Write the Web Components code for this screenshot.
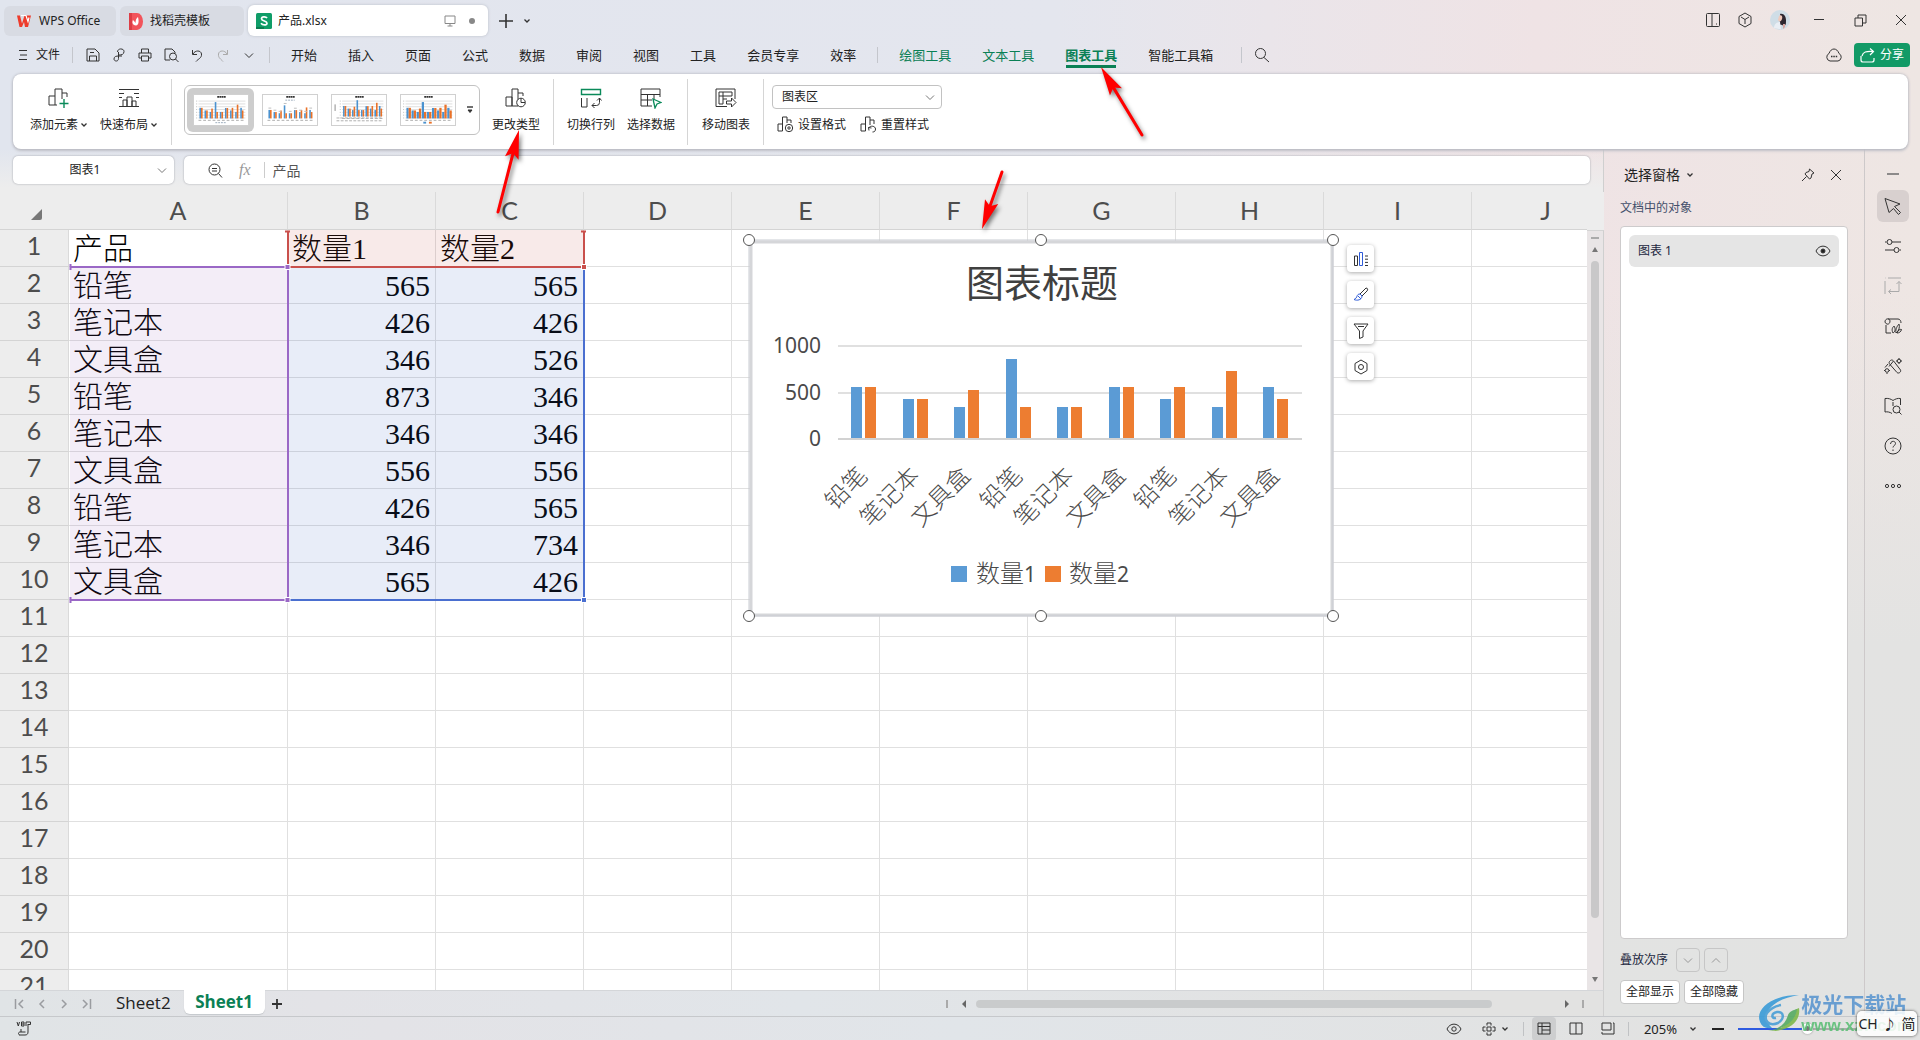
<!DOCTYPE html>
<html lang="zh-CN">
<head>
<meta charset="utf-8">
<title>产品.xlsx - WPS Office</title>
<style>
html,body{height:100%;margin:0}
body{overflow:hidden;font:12px/16px "Noto Sans","Noto Sans CJK SC",sans-serif;color:#222}
</style>
</head>
<body>
<wps-app></wps-app>
<script>
const BASE = `*{box-sizing:border-box}
button,input,select{font:inherit;color:inherit;margin:0;padding:0;border:0;background:none;outline:0}
button{display:inline-flex;align-items:center;justify-content:center;white-space:nowrap}
a{color:inherit;text-decoration:none}`;
function define(name, css, html, setup) {
  customElements.define(name, class extends HTMLElement {
    constructor() {
      super();
      this.attachShadow({ mode: 'open' });
    }
    connectedCallback() {
      const body = typeof html === 'function' ? html(this) : html;
      this.shadowRoot.innerHTML = `<style>${BASE}${css}</style>${body}`;
      if (setup) setup(this);
    }
  });
}

/* Icon set: [width, height, markup] */
const ICONS = {
  wps: [16,14,'<path d="M1 1.500h3l2 8L8.500 1.500H15L12 13H9L8 8l-2 5H3.500z" fill="#ee3b2b" stroke="none"/><path d="M5 1.500h5l2 6 1-4" stroke="#fff" stroke-width="1.200"/>'],
  docer: [15,17,'<path d="M1 0h8a6 8.500 0 010 17H1z" fill="#f2545b" stroke="none"/><path d="M1 0h3v17H1z" fill="#dd3d45" stroke="none"/><path d="M8 12.500C4 12 4 9 5 7c1 1 2 2 2.500 3C7.500 7 8.500 5 10 4c1 4 1 8-2 8.500z" fill="#fff" stroke="none"/>'],
  sheetdoc: [16,16,'<rect width="16" height="16" rx="1.500" fill="#0f9d68" stroke="none"/><path d="M0 14h8v2H0z" fill="#0b7d50" stroke="none"/><path d="M11 5.200C10 3.300 5.500 3.300 5.500 5.800S11 7.800 11 10.200 6.500 12.300 5 10.300" stroke="#fff" stroke-width="1.700"/>'],
  monitor: [12,12,'<path d="M1 1h10v7.500H1zM6 8.500V11M3.500 11h5" stroke="#888"/>'],
  dot: [8,8,'<circle cx="4" cy="4" r="3" fill="#888" stroke="none"/>'],
  plus: [14,14,'<path d="M7 0v14M0 7h14" stroke-width="1.600"/>'],
  plusb: [10,10,'<path d="M5 0v10M0 5h10" stroke-width="1.800"/>'],
  chev: [8,6,'<path d="M1.500 1.500L4 4l2.500-2.500" stroke-width="1.300"/>'],
  chevw: [10,7,'<path d="M1 1.500l4 4 4-4"/>'],
  chevup: [10,7,'<path d="M1 5.500l4-4 4 4"/>'],
  menu: [10,12,'<path d="M1 1.500h8M2 6h7M1 10.500h8"/>'],
  save: [14,14,'<path d="M1 13V1h8l4 4v8zM3.500 13V8h7v5M4 4.500h4"/>'],
  share2: [12,14,'<path d="M4.500 4C4.500 0 11 0 11 3.500c0 3-2.500 3.500-5 3.500M5.500 4v6.500c0 3.500-4.500 3-4.500.5S3 8 6 8h3"/>'],
  print: [14,14,'<path d="M3.500 5V1h7v4M3.500 10H1V5h12v5h-2.500M3.500 8h7v5h-7z"/>'],
  preview: [15,14,'<path d="M6 12H1V1h7l3 3M11 5V4"/><circle cx="9" cy="8.500" r="3.500"/><path d="M11.500 11l3 3"/>'],
  undo: [12,13,'<path d="M1.500 1v4.500H6M2 5C4 1 10 1 10.500 5S7 10 5 12.500"/>'],
  redo: [12,13,'<path d="M10.500 1v4.500H6M10 5C8 1 2 1 1.500 5S4 10 6 12.500"/>'],
  search: [16,16,'<circle cx="6.500" cy="6.500" r="5"/><path d="M10 10.500l5 4.500"/>'],
  book: [14,14,'<rect x=".5" y=".5" width="13" height="13" rx="1"/><path d="M6 .5v13M10 11h1"/>'],
  cube: [14,16,'<path d="M7 1l6 3.500v7L7 15l-6-3.500v-7zM3 5l4 2.500L11 5M7 7.500V12"/>'],
  avatar: [20,20,'<circle cx="10" cy="10" r="10" fill="#cfdde6" stroke="none"/><path d="M10 4c4-1 6 3 6 6 0 4 0 5-2 6l-2-1-4-1 3-4z" fill="#2d2730" stroke="none"/><path d="M9 6c2-2 4 0 3 3s-3 3-4 1z" fill="#efc9bb" stroke="none"/><path d="M4 18c0-4 3-6 6-6l1 7.500z" fill="#e9eef4" stroke="none"/><path d="M13 14h2v3l-2 2z" fill="#d9a5a0" stroke="none"/>'],
  min: [12,12,'<path d="M1 5.500h10"/>'],
  minb: [12,12,'<path d="M0 6h12" stroke-width="2"/>'],
  restore: [13,13,'<path d="M1 4h7.500v8H1zM4 4V1h8v8H8.500"/>'],
  close: [12,12,'<path d="M1 1l10 10M11 1L1 11"/>'],
  cloud: [18,14,'<path d="M5 13a4 4 0 01-1-7.500C5 2.500 7 1 9 1s4 1.500 5 4.500A4 4 0 0113 13z"/><path d="M6 8.500h1.500M8.300 8.500h1.500M10.700 8.500h1.500" stroke-width="1.500"/>'],
  shareout: [15,15,'<path d="M1 8v4a2 2 0 002 2h9a2 2 0 002-2v-2M2 8c1-4 4-5 11-4.500M10 .5l3.500 3L10 7" stroke="#fff" stroke-width="1.200"/>'],
  addel: [22,20,'<path d="M1 17V8h6M7 17V1h7v10M1 17h8M14 5h5v4"/><path d="M16 11v9M11.500 15.500h9" stroke="#0a8a5a" stroke-width="1.400"/>'],
  quick: [20,20,'<path d="M0 1.500h20M0 5.500h5M15 5.500h5M0 9.500h3M17 9.500h3M0 18.500h20M4 18V12h4v6M8 18V9h5v9M13 18v-5h4v5"/>'],
  chtype: [22,20,'<path d="M1 18V9h6v9zM7 18V1h6v17H7M13 5h5v3"/><circle cx="16" cy="14.500" r="4.300" fill="#fff"/><path d="M16 10.500v4h4"/>'],
  swap: [22,20,'<path d="M1.500 1.500h19v5h-19z" stroke="#0a8a5a" stroke-width="1.400"/><path d="M1.500 10v9h5.500v-9M12 17.500h4.500a3 3 0 003-3V10M17 12.500l2.500-2.500 2 2.500M14.500 15L12 17.500l2.500 2.500"/>'],
  seldata: [22,21,'<path d="M12 18H1V1h19v8M1 6.500h19M1 12h11M7.500 6.500V18M14 6.500V11"/><path d="M13 11l8 3.500-4 1.500-2 4z" stroke="#0a8a5a" stroke-width="1.300" fill="#fff"/>'],
  move: [22,20,'<path d="M12 18.500H1V1h19v10M4 4h13v4H4zM4 8v8h4V4M8 11h4"/><path d="M11.500 13h5v-3l4.500 4.500-4.500 4.500v-3h-5z" fill="#fff"/>'],
  fmt: [17,17,'<path d="M1 15V8h4.500v7zM5.500 15V1H10v6M10 4h4v3"/><circle cx="12" cy="12" r="3.700" fill="#fff"/><circle cx="12" cy="12" r="1.200"/>'],
  reset: [17,17,'<path d="M1 15V8h4.500v7zM5.500 15V1H10v8M10 4h4v4M9 14.500l-.5-3 3 .5M8.500 12c2-3 7-2 7 1 0 2-1 3-3 3"/>'],
  more: [6,8,'<path d="M0 1h6" stroke-width="1.400"/><path d="M1 4l2 2.500L5 4z" fill="#333"/>'],
  zoomout: [15,15,'<circle cx="6.500" cy="6.500" r="5.500"/><path d="M10.500 10.500L14 14.500M4 5.500h5M4 8h5"/>'],
  corner: [11,11,'<path d="M11 0v9a2 2 0 01-2 2H0z" fill="#777" stroke="none"/>'],
  up: [8,6,'<path d="M4 0l3 5H1z" fill="#777" stroke="none"/>'],
  down: [8,6,'<path d="M4 6L1 1h6z" fill="#777" stroke="none"/>'],
  left: [6,8,'<path d="M1 4l4-4v8z" fill="#666" stroke="none"/>'],
  right: [6,8,'<path d="M5 4L1 0v8z" fill="#666" stroke="none"/>'],
  first: [12,10,'<path d="M1.500 0v10M9 1L5 5l4 4" stroke-width="1.500"/>'],
  prev: [12,10,'<path d="M8 1L4 5l4 4" stroke-width="1.500"/>'],
  next: [12,10,'<path d="M4 1l4 4-4 4" stroke-width="1.500"/>'],
  last: [12,10,'<path d="M10.500 0v10M3 1l4 4-4 4" stroke-width="1.500"/>'],
  vb: [16,15,'<path d="M1 1l1.300 4L3.500 1M5.500 1v4h2.500V1zM5.500 3H8M10 5V1h4.500v2.500H12M12 3v8c0 2-1 3-3 3H3.500M5 11V8M4 11h5.500M4 11c-2 0-2 3 0 3"/>'],
  pin: [14,14,'<path d="M8.500 1l4.500 4-2 1-1 4-1.500 1L4 6l1-1.500 3-1zM5.500 8.500L1 13"/>'],
  eye: [16,12,'<path d="M1 6c3-6.500 11-6.500 14 0-3 6.500-11 6.500-14 0z"/><circle cx="8" cy="6" r="2" fill="#222"/>'],
  eye2: [16,12,'<path d="M1 6c3-6.500 11-6.500 14 0-3 6.500-11 6.500-14 0z"/><circle cx="8" cy="6" r="2.200"/>'],
  cursor: [18,18,'<path d="M1 1.500l15 5.500-5.500 2.500 6 6-2 2-5-6-4.500 4z"/>'],
  sliders: [18,16,'<path d="M1 4h1.500M8 4h9M1 12h9M15.500 12H17"/><circle cx="5.500" cy="4" r="2.500"/><circle cx="12.500" cy="12" r="2.500"/>'],
  resize: [18,18,'<path d="M4 1h13M1 4v13M1 1h.5M15 4.500V14.500H5M12.500 7L15 4.500 17.500 7M7 12.500L4.500 14.500 7 17"/>'],
  album: [18,16,'<path d="M2 7v8h5M1 4c0-4 5-4 5-1 0 4-4 4-5 1zM4 1h10c2 0 3 2 3 4M9 15c-2-4 0-6 1-7 2 3 1 6-1 7zM12 15c-1-4 2-8 3-9 1 3 0 7-3 9zM13 15c1-3 3-4 4.500-3.500C17 14 15 15 13 15z"/>'],
  wand: [18,16,'<path d="M5.500 3.500c1.500-2 3-2 4.500 0L16.500 12c1 2-2 4-3.500 2.500L6 6.500c-1-1-1.200-2-.5-3zM9.500 3L5 8.500M1 9.500L4 6"/><circle cx="15" cy="3" r="1.800"/><circle cx="3" cy="12.500" r="1.800"/><path d="M15 0v1M15 5v1M12 3h1M17 3h1M0 12.500h1M3 15v1M5 12.500h1"/>'],
  bookfind: [18,18,'<path d="M9 5v4M9 3.500C7 2 4 1 1 1.500V15c2-.5 5 0 7 1.500M9 3.500C11 2 14 1 16.500 1.500V8"/><circle cx="12.500" cy="12.500" r="3.500"/><path d="M15 15l2.500 2.500"/>'],
  help: [18,18,'<circle cx="9" cy="9" r="8"/><path d="M6.500 7c0-3.500 5-3.500 5-.5 0 2-2.500 2-2.500 4M9 12.500v1.500"/>'],
  dots3: [18,6,'<circle cx="3" cy="3" r="1.600"/><circle cx="9" cy="3" r="1.600"/><circle cx="15" cy="3" r="1.600"/>'],
  target: [14,14,'<path d="M5 3.500V1h4v2.500M5 10.500V13h4v-2.500M3.500 5H1v4h2.500M10.500 5H13v4h-2.500M5 5h4v4H5z"/>'],
  normal: [14,13,'<path d="M1 1h12v11H1zM1 4.500h12M5 1v11M5 8h8"/>'],
  split: [14,13,'<path d="M1 1h12v11H1zM7 1v11"/>'],
  reader: [14,13,'<path d="M1 1h9v7H1zM1 10v2h12V1h-1"/>'],
  celement: [16,16,'<path d="M1.500 5v9.500h3V5z"/><path d="M6.500 1.500v13h3v-13z" stroke="#2e5bd8"/><path d="M12 5h3M12 8.200h3M12 11.400h3M12 14.500h3"/>'],
  brush: [16,15,'<path d="M7 7l6-6c2 0 2 2 1 3L9 9z"/><path d="M7 7C3 7 5 11 1 12.500 4 14 9 13 9 9zM5 9l3 3" stroke="#2e5bd8"/>'],
  funnel: [16,16,'<path d="M1 1h14L10 8v6l-3.500 1.500V8zM5 3.500h6"/>'],
  hexset: [16,16,'<path d="M8 1l6 3.500v7L8 15l-6-3.500v-7z"/><circle cx="8" cy="8" r="2.500"/>'],
  globe: [42,38,'<path d="M2 28C-3 16 12 1 41 1 24 4 12 10 9 20c-1 6 1 10 5 14C8 35 4 33 2 28z" fill="#3a9bd8" stroke="none"/><path d="M10 37c13 0 21-7 23-17 1-3 4-4 8-6 2 12-8 24-31 23z" fill="#7fb84a" stroke="none"/><path d="M10 37c12-2 18-8 20-16 1-3 5-5 9-6-1 10-10 20-29 22z" fill="#56ab62" stroke="none"/><path d="M18 24c-5 1-5-5 1-6 7-1 8 7 1 11-9 4-15-3-11-10 3-4 8-7 14-8" stroke="#4a9fd6" stroke-width="2.500"/>']
};
define('ui-icon', `:host{display:inline-flex;flex:none;color:#333}svg{display:block}`, el => {
  const [w, h, m] = ICONS[el.getAttribute('name')];
  return `<svg width="${w}" height="${h}" viewBox="0 0 ${w} ${h}" fill="none" stroke="currentColor" aria-hidden="true">${m}</svg>`;
});
const ic = (n, c) => `<ui-icon name="${n}"${c ? ` style="color:${c}"` : ''}></ui-icon>`;

define('title-bar', `:host{display:flex;height:36px;align-items:flex-end;padding:0 12px 0 4px;gap:4px}
.tab{height:30px;display:flex;align-items:center;border-radius:6px;background:#d8dbe3;padding:0 12px;gap:7px;font-size:12px;cursor:default}
.home{width:112px}.docer{width:124px;padding-left:8px}
.on{width:240px;height:31px;background:#fff;box-shadow:0 0 3px #b9bdc6;padding-left:8px;gap:6px}
.on span{flex:1}.on ui-icon+ui-icon{margin-left:6px}
.new{display:flex;gap:10px;height:30px;align-items:center;padding-left:7px}
.win{margin-left:auto;display:flex;align-items:center;height:32px;gap:18px}
.win button{min-width:14px}.win .sys{display:flex;gap:27px;margin-left:4px}`,
`<a class="tab home" href="#">${ic('wps')}<span>WPS Office</span></a><a class="tab docer" href="#">${ic('docer')}<span>找稻壳模板</span></a>
<a class="tab on" href="#">${ic('sheetdoc')}<span>产品.xlsx</span>${ic('monitor')}${ic('dot')}</a>
<div class="new"><button aria-label="新建">${ic('plus')}</button><button aria-label="更多">${ic('chev')}</button></div>
<div class="win"><button aria-label="侧栏">${ic('book')}</button><button aria-label="应用">${ic('cube')}</button><button aria-label="账户">${ic('avatar')}</button>
<div class="sys"><button aria-label="最小化">${ic('min')}</button><button aria-label="还原">${ic('restore')}</button><button aria-label="关闭">${ic('close')}</button></div></div>`);

define('menu-bar', `:host{display:flex;height:38px;align-items:center;padding:0 10px 0 18px}
.file{gap:8px;font-size:12px;width:54px;justify-content:flex-start}
i{width:1px;height:16px;background:#c4c6cc}
.quick{display:flex;margin:0 7px}.quick button{width:26px;height:24px}
nav{display:flex;gap:31px;font-size:13px;line-height:20px;padding-left:21px;align-items:center}
nav a{white-space:nowrap}.g{color:#0a8055}
.on{font-weight:700;box-shadow:0 4px 0 -1px #0a8055}
nav i{margin:0 -10px}nav i.end{margin-left:-3px}.find{margin-left:-9px}
.right{margin-left:auto;display:flex;align-items:center;gap:11px}
.share{width:56px;height:24px;border-radius:4px;background:#129a66;color:#fff;gap:5px;font-size:12px}`,
`<button class="file">${ic('menu')}文件</button><i></i>
<div class="quick">${[['save','保存'],['share2','分享'],['print','打印'],['preview','预览'],['undo','撤销']].map(b=>`<button aria-label="${b[1]}">${ic(b[0])}</button>`).join('')}<button aria-label="恢复">${ic('redo','#aaa')}</button><button aria-label="更多">${ic('chevw')}</button></div><i></i>
<nav>${['开始','插入','页面','公式','数据','审阅','视图','工具','会员专享','效率'].map(t=>`<a href="#">${t}</a>`).join('')}<i></i><a class="g" href="#">绘图工具</a><a class="g" href="#">文本工具</a><a class="g on" href="#">图表工具</a><a href="#">智能工具箱</a><i class="end"></i><button class="find" aria-label="查找">${ic('search')}</button></nav>
<div class="right"><button aria-label="云">${ic('cloud')}</button><button class="share">${ic('shareout')}分享</button></div>`);

define('ribbon-button', `:host{display:inline-flex}
button{flex-direction:column;height:46px;justify-content:space-between;font-size:12px;line-height:16px}
.i{height:22px;display:flex;align-items:center}.t{display:flex;align-items:center;gap:2px}`,
el => `<button><span class="i">${ic(el.getAttribute('icon'))}</span><span class="t"><slot></slot>${el.hasAttribute('menu') ? ic('chev') : ''}</span></button>`);

const SERIES = [[565,565],[426,426],[346,526],[873,346],[346,346],[556,556],[426,565],[346,734],[565,426]];
const NAMES = ['铅笔','笔记本','文具盒'];
define('chart-thumb', `:host{display:flex;width:56px;height:32px}svg{background:#fff;border:1px solid #d0d0d0}`, el => {
  const v = +el.getAttribute('variant');
  const y0 = v === 2 ? 23 : 25, x0 = v === 2 ? 10 : 4, step = (53 - x0) / 9, hs = v === 1 ? 16 : 20;
  let s = '';
  if (v !== 1) for (let y = 6; y < y0; y += 3) s += `<path d="M${x0} ${y}.5H54" stroke="#ddd"/>`;
  s += `<path d="M24 2h9" stroke="#333" stroke-width="2" stroke-dasharray="2 .4"/>`;
  SERIES.forEach((p, i) => {
    const x = x0 + 1 + i * step, w = v === 3 ? 2.400 : 1.700;
    s += `<rect x="${x}" y="${y0 - p[0] / 1000 * hs}" width="${w}" height="${p[0] / 1000 * hs}" fill="#4b92cf"/><rect x="${x + w}" y="${y0 - p[1] / 1000 * hs}" width="${w}" height="${p[1] / 1000 * hs}" fill="#ea7228"/>`;
    if (v === 1) s += `<path d="M${x} ${y0 - p[0] / 1000 * hs - 2}h3" stroke="#bbb"/>`;
  });
  s += `<path d="M${x0} ${y0 + 2}H53" stroke="#aaa" stroke-dasharray="3 2"/>`;
  if (v === 0) s += '<path d="M22 29.500h11" stroke="#9ab" stroke-dasharray="2 1"/>';
  if (v === 1) s += '<path d="M23 5.500h10" stroke="#9ab" stroke-dasharray="2 1"/>';
  if (v === 2) s += `<path d="M4 24.500H53M4 27.500H53" stroke="#aaa" stroke-dasharray="3 1.500"/><path d="M2.500 10v7" stroke="#888"/>`;
  if (v === 3) s += '<path d="M23 29.500h3" stroke="#4b92cf" stroke-width="2"/><path d="M29 29.500h3" stroke="#ea7228" stroke-width="2"/>';
  if (v !== 1) s += `<path d="M${x0 - 2} 6v19" stroke="#bbb" stroke-dasharray="1 2"/>`;
  return `<svg width="56" height="32" viewBox="0 0 56 32">${s}</svg>`;
});

define('ribbon-bar', `:host{display:flex;height:75px;margin:0 12px 0 13px;background:#fff;border-radius:8px;box-shadow:0 0 3px #aeb0b8,0 2px 3px #c5c5cc;padding:5px 0 4px 17px}
.grp{display:flex;padding-top:8px;align-items:flex-start}
.a{gap:12px;width:141px}
hr{margin:0;border:0;width:1px;height:66px;background:#d5d5d5;flex:none}
.b{padding:6px 13px 0 12px}.c{padding-left:13px;padding-right:12px;gap:12px}.d{padding-left:14px;padding-right:13px}
.gallery{display:flex;border:1px solid #c2c2c2;border-radius:6px;width:296px;height:50px;padding:2px;gap:2px}
.gallery button{width:68px;height:44px;border-radius:6px}.gallery button.on{background:#cdcdcd}.gallery .m{width:14px}
.b ribbon-button{margin:2px 0 0 12px}
.e{display:flex;flex-direction:column;gap:7px;padding:6px 0 0 8px}
label{display:grid;width:170px;height:24px;align-items:center}
label>*{grid-area:1/1}label ui-icon{justify-self:end;margin-right:7px;pointer-events:none}
select{appearance:none;width:100%;height:24px;border:1px solid #c2c2c2;border-radius:4px;padding-left:9px}
.row{display:flex;gap:14px;padding-left:5px}.row button{gap:4px;line-height:16px}`,
`<div class="grp a"><ribbon-button icon="addel" menu>添加元素</ribbon-button><ribbon-button icon="quick" menu>快速布局</ribbon-button></div><hr>
<div class="grp b"><div class="gallery">${[0,1,2,3].map(i=>`<button class="${i?'':'on'}" aria-label="样式"><chart-thumb variant="${i}"></chart-thumb></button>`).join('')}<button class="m" aria-label="更多样式">${ic('more')}</button></div><ribbon-button icon="chtype">更改类型</ribbon-button></div><hr>
<div class="grp c"><ribbon-button icon="swap">切换行列</ribbon-button><ribbon-button icon="seldata">选择数据</ribbon-button></div><hr>
<div class="grp d"><ribbon-button icon="move">移动图表</ribbon-button></div><hr>
<div class="e"><label><select aria-label="图表元素"><option>图表区</option></select>${ic('chevw','#777')}</label><div class="row"><button>${ic('fmt')}设置格式</button><button>${ic('reset')}重置样式</button></div></div>`);

define('formula-bar', `:host{display:flex;gap:10px;padding:7px 13px 8px}
.box{height:28px;background:#fff;border-radius:5px;box-shadow:0 0 2px #999ba2;display:flex;align-items:center}
.name{width:161px;padding-right:7px}.name input{flex:1;min-width:0;text-align:center}
.fx{flex:1;padding-left:24px;gap:16px}.fx em{font:italic 16px/20px "Liberation Serif",serif;color:#999}
.fx i{width:1px;height:16px;background:#ccc}.fx input{flex:1;color:#555;font-size:14px;margin-left:-8px;height:26px}
.fx em+i{margin-left:-3px}`,
`<div class="box name"><input aria-label="名称框" value="图表1"><button aria-label="展开">${ic('chevw','#777')}</button></div>
<div class="box fx"><button aria-label="浏览">${ic('zoomout')}</button><em>fx</em><i></i><input aria-label="编辑栏" value="产品"></div>`);

define('chart-object', `:host{display:block;width:584px;height:376px}
svg{display:block;overflow:visible}
text{font-family:"Noto Sans","Noto Sans CJK SC",sans-serif;font-weight:300;fill:#4a4a4a}
.n{font-weight:400;font-size:21px}.c{font-size:24px}.t{font-size:38px;fill:#404040;font-weight:400}`, () => {
  let s = '<rect x="2" y="2" width="581" height="373" fill="#fff" stroke="#d5d6d9" stroke-width="3"/><path d="M0 376V0h584v376z" stroke="#c9ccd2" fill="none"/>';
  s += '<text class="t" x="293" y="57" text-anchor="middle">图表标题</text>';
  [[106,'1000'],[153,'500'],[199,'0']].forEach(([y, t], i) => {
    s += `<path d="M89 ${y}H553" stroke="${i > 1 ? '#d2d2d2' : '#e0e0e0'}" stroke-width="2"/><text class="n" x="72" y="${y + 7}" text-anchor="end">${t}</text>`;
  });
  SERIES.forEach((p, i) => {
    const x = Math.round(102 + i * 51.500);
    p.forEach((v, k) => {
      const h = Math.round(v * 0.091);
      s += `<rect x="${x + k * 14}" y="${198 - h}" width="11" height="${h}" fill="${k ? '#ed7d31' : '#5b9bd5'}"/>`;
    });
    s += `<text class="c" transform="translate(${x + 18} 237) rotate(-45)" text-anchor="end">${NAMES[i % 3]}</text>`;
  });
  s += '<rect x="202" y="326" width="16" height="16" fill="#5b9bd5"/><rect x="296" y="326" width="16" height="16" fill="#ed7d31"/>';
  s += '<text class="c" x="227" y="342">数量<tspan class="n">1</tspan></text><text class="c" x="320" y="342">数量<tspan class="n">2</tspan></text>';
  [[0,0],[292,0],[584,0],[0,376],[292,376],[584,376]].forEach(([x, y]) => s += `<circle cx="${x}" cy="${y}" r="5.500" fill="#fff" stroke="#555"/>`);
  return `<svg width="584" height="376" viewBox="0 0 584 376" role="img" aria-label="图表标题">${s}</svg>`;
});
define('chart-tools', `:host{display:flex;flex-direction:column;gap:9px}
button{width:27px;height:27px;background:#fff;border-radius:4px;box-shadow:0 1px 4px #aaa}`,
[['celement','图表元素'],['brush','图表样式'],['funnel','图表筛选器'],['hexset','设置']].map(b => `<button aria-label="${b[1]}">${ic(b[0])}</button>`).join(''));

define('sheet-grid', `:host{display:flex;flex:1;min-height:0;background:#ededed;overflow:hidden}
.view{flex:1;min-width:0;overflow:hidden;position:relative}
table{border-spacing:0;table-layout:fixed;width:1620px;background:#fff}
col.h{width:69px}col.a{width:219px}
th{font:400 25px/30px Lato,"Noto Sans",sans-serif;color:#4d4d4d;background:#ededed;padding:0;border-right:1px solid #dadada;border-bottom:1px solid #d4d4d4}
thead th{height:38px;padding-bottom:2px}thead th:first-child{border-right:0;padding:0 27px 0 0;text-align:right}
thead th ui-icon{vertical-align:1px;display:inline-block}
tbody tr{height:37px}tbody th{padding-bottom:6px}
td{padding:2px 5px 0 4px;border-right:1px solid #e0e0e0;border-bottom:1px solid #e0e0e0;font:300 30px/34px "Liberation Serif","Noto Sans CJK SC",serif;color:#000;white-space:nowrap;height:37px}
td.n{text-align:right}
.marks{position:absolute;left:0;top:0;pointer-events:none}
chart-object{position:absolute;left:749px;top:48px}
chart-tools{position:absolute;left:1347px;top:53px}
.vs{width:17px;margin-top:38px;display:flex;flex-direction:column;align-items:center;border-top:1px solid #d4d4d4;background:#e9e5e6;padding:6px 0 8px;gap:8px;border-right:1px solid #cfcfcf}
.vs i{width:8px;height:2px;background:#aaa}.vs b{width:8px;flex:1;background:#c9c8c9;border-radius:4px;margin-bottom:50px}`, () => {
  const L = 'ABCDEFGHIJ'.split('');
  let rows = '';
  for (let r = 1; r <= 21; r++) {
    let t = `<tr><th scope="row">${r}</th>`;
    L.forEach((_, c) => {
      let v = '', n = '';
      if (r === 1) v = ['产品','数量1','数量2'][c] || '';
      else if (r <= 10) { if (c === 0) v = NAMES[(r - 2) % 3]; else if (c < 3) { v = SERIES[r - 2][c - 1]; n = ' class="n"'; } }
      t += `<td${n}>${v}</td>`;
    });
    rows += t + '</tr>';
  }
  const sq = (x, y, c) => `<rect x="${x - 2.500}" y="${y - 2.500}" width="5" height="5" fill="${c}" stroke="#fff"/>`;
  return `<div class="view"><table><colgroup><col class="h"><col class="a">${'<col>'.repeat(9)}</colgroup><thead><tr><th>${ic('corner')}</th>${L.map(l => `<th scope="col">${l}</th>`).join('')}</tr></thead><tbody>${rows}</tbody></table>
<svg class="marks" width="600" height="420" viewBox="0 0 600 420" fill="none">
<rect x="288" y="38" width="296" height="37" fill="#c9504c" fill-opacity=".12"/><rect x="70" y="75" width="218" height="333" fill="#8a4fb5" fill-opacity=".1"/><rect x="288" y="75" width="296" height="333" fill="#4068c8" fill-opacity=".12"/>
<path d="M290 408H584V76" stroke="#4a6fd0" stroke-width="2"/>
<path d="M70 75H288V408H70" stroke="#9a68c6" stroke-width="2"/><path d="M288 39V75H584V39" stroke="#c9504c" stroke-width="2"/>
<path d="M285 39.500h5M581 39.500h5" stroke="#c9504c" stroke-width="2"/><path d="M70.500 72v6M70.500 405v6" stroke="#9a68c6" stroke-width="2"/>
${sq(287.500,75,'#9a68c6')}${sq(287.500,408,'#9a68c6')}${sq(584,75,'#c9504c')}${sq(584,408,'#4a6fd0')}</svg>
<chart-object></chart-object><chart-tools></chart-tools></div>
<div class="vs"><i></i>${ic('up')}<b></b>${ic('down')}</div>`;
});

define('sheet-tabs', `:host{display:flex;height:26px;align-items:center;border-top:1px solid #d4d6d9;padding:0 19px 0 14px;border-right:1px solid #cfcfcf}
.nav{display:flex;gap:10px;margin-right:24px}
.t{font:17px/22px "Open Sans","Noto Sans",sans-serif;color:#222;padding-bottom:2px}
.on{align-self:flex-start;margin:-1px 0 0 13px;width:81px;height:24px;background:#fff;border-radius:0 0 6px 6px;text-align:center;line-height:24px;color:#0a8055;font-weight:700;box-shadow:0 1px 1px #c5c8cc}
.add{margin-left:7px}
.hs{margin-left:auto;width:638px;display:flex;align-items:center}
.hs i{width:2px;height:8px;background:#aaa}.hs b{flex:1;height:8px;border-radius:4px;background:#c9cbcc;margin:0 72px 0 9px}.hs i+ui-icon{margin-left:13px}.hs ui-icon+i{margin-left:12px}`,
`<div class="nav">${[['first','首个'],['prev','上一个'],['next','下一个'],['last','末个']].map(b=>`<button aria-label="${b[1]}">${ic(b[0],'#9a9ca0')}</button>`).join('')}</div>
<a class="t" href="#">Sheet2</a><a class="t on" href="#">Sheet1</a><button class="add" aria-label="新建工作表">${ic('plusb')}</button>
<div class="hs"><i></i>${ic('left')}<b></b>${ic('right')}<i></i></div>`);

define('selection-pane', `:host{display:flex;flex-direction:column;width:261px;padding:16px 16px 12px;border-right:1px solid #cdc9ca}
header{display:flex;align-items:center;height:20px;padding:0 6px 0 4px}
h2{font:14px/20px "Noto Sans","Noto Sans CJK SC",sans-serif;margin:0;flex:1;display:flex;align-items:center;gap:6px}
header button+button{margin-left:15px}
p{margin:15px 0 10px;color:#44506b;line-height:16px}
ul{list-style:none;margin:0;padding:8px;flex:1;background:#fff;border:1px solid #cdcbcc;border-radius:4px}
li{display:flex;justify-content:space-between;align-items:center;height:32px;border-radius:6px;background:#e5e5e5;padding:0 8px 0 9px;color:#1c2740}
.o{display:flex;align-items:center;gap:4px;margin:9px 0 8px;color:#1c2740}.o span{margin-right:4px}
.o button{width:24px;height:24px;border:1px solid #c6c6c6;border-radius:4px}
.s{display:flex;gap:4px}.s button{width:60px;height:24px;background:#fff;border:1px solid #c6c6c6;border-radius:4px}`,
`<header><h2>选择窗格${ic('chev')}</h2><button aria-label="固定">${ic('pin')}</button><button aria-label="关闭">${ic('close')}</button></header>
<p>文档中的对象</p><ul><li>图表 1<button aria-label="显示">${ic('eye')}</button></li></ul>
<div class="o"><span>叠放次序</span><button aria-label="下移">${ic('chevw','#999')}</button><button aria-label="上移">${ic('chevup','#999')}</button></div>
<div class="s"><button>全部显示</button><button>全部隐藏</button></div>`);

define('side-bar', `:host{display:flex;flex-direction:column;align-items:center;width:55px;gap:8px;padding-top:17px}
button{width:32px;height:32px;border-radius:6px}.fold{height:16px}.on{background:#d8d0cf}`,
`<button class="fold" aria-label="收起">${ic('minb','#8c8a8a')}</button><button class="on" aria-label="选择">${ic('cursor')}</button>${[['sliders','属性'],['resize','大小'],['album','素材'],['wand','美化'],['bookfind','查找'],['help','帮助'],['dots3','更多']].map(b=>`<button aria-label="${b[1]}">${ic(b[0], b[0] === 'resize' ? '#aaa' : '')}</button>`).join('')}`);

define('status-bar', `:host{display:flex;height:24px;align-items:center;border-top:1px solid #c6c8cb;padding-left:16px}
.r{margin-left:auto;display:flex;align-items:center}
.r>i{width:1px;height:14px;background:#c0c2c4}
.read{gap:5px;margin:0 14px 0 20px}
.v{width:32px;height:24px}.v.on{width:24px;background:#cdcecf;border-radius:4px;margin:0 4px 0 8px}
.v+i{margin-left:4px}
.z{font-size:13px;line-height:18px;margin-left:15px;gap:12px}.z+button{margin-left:15px}
input{appearance:none;width:128px;height:14px;margin:0 54px 0 14px;background:linear-gradient(90deg,#2f5be0 55%,#aaa 55%) center/100% 2px no-repeat}
input::-webkit-slider-thumb{appearance:none;width:11px;height:11px;border-radius:50%;border:3px solid #fff;background:#777;box-shadow:0 0 2px #888}`,
`<button aria-label="宏">${ic('vb')}</button>
<div class="r"><button aria-label="护眼">${ic('eye2')}</button><button class="read" aria-label="阅读模式">${ic('target')}${ic('chev')}</button><i></i>
<button class="v on" aria-label="普通视图">${ic('normal')}</button><button class="v" aria-label="分页预览">${ic('split')}</button><button class="v" aria-label="阅读视图">${ic('reader')}</button><i></i>
<button class="z">205%${ic('chev')}</button><button aria-label="缩小">${ic('minb','#222')}</button><input type="range" aria-label="缩放" min="0" max="100" value="55"></div>`);

define('site-mark', `:host{display:flex;position:absolute;right:8px;bottom:4px;align-items:center;gap:1px;pointer-events:none;opacity:.9}
div{display:flex;flex-direction:column}
b{font:700 21px/26px "Noto Sans CJK SC",sans-serif;color:#5d97d0}
span{font:700 17px/20px "Liberation Sans",sans-serif;color:#5fbf78}`,
`${ic('globe')}<div><b>极光下载站</b><span>www.xz7.com</span></div>`);
define('ime-bar', `:host{display:flex;position:absolute;right:3px;bottom:4px;width:60px;height:25px;align-items:center;justify-content:center;gap:5px;background:rgba(255,255,255,.85);border-radius:5px;box-shadow:0 0 3px #444;font-size:14px;color:#222}`,
`<span>CH</span><span>♪</span><span>简</span>`);

/* Red pointers with a soft shadow, each given as tail and tip */
define('red-arrows', `:host{position:absolute;left:0;top:0;z-index:5;pointer-events:none}svg{display:block;filter:drop-shadow(2px 3px 2px rgba(0,0,0,.5))}`, () => {
  const s = [[1142,135,1101,67],[498,212,519,130],[1002,172,982,229]].map(([x1, y1, x2, y2]) => {
    const a = Math.atan2(y2 - y1, x2 - x1) * 180 / Math.PI, d = Math.hypot(x2 - x1, y2 - y1);
    return `<g transform="translate(${x2} ${y2}) rotate(${a})"><path d="M${-d} 0H-20" stroke="#f00" stroke-width="3" stroke-linecap="round"/><path d="M0 0L-29 -7-24 0-29 7z" fill="#f00"/></g>`;
  }).join('');
  return `<svg width="1160" height="240" viewBox="0 0 1160 240">${s}</svg>`;
});

define('wps-app', `:host{display:flex;flex-direction:column;height:100vh;position:relative;overflow:hidden;
background:linear-gradient(180deg,transparent 28%,#e3e3e2 62%,#e2e3e2 100%),linear-gradient(90deg,#e1e5ee 0%,#e4e6ee 55%,#eae5ea 66%,#efe3e5 80%,#eee6e3 100%)}
main{display:flex;flex:1;min-height:0}
section{flex:1;min-width:0;display:flex;flex-direction:column}
formula-bar{background:linear-gradient(180deg,transparent,#ededed 90%);border-right:1px solid #cfcfcf}
sheet-tabs,status-bar{background:linear-gradient(90deg,#e0e4e6,#e3e3e7 20%,#e1e5e9 50%,#e2e2e1 90%)}
ribbon-bar{z-index:1}`,
`<title-bar></title-bar><menu-bar></menu-bar><ribbon-bar></ribbon-bar>
<main><section><formula-bar></formula-bar><sheet-grid></sheet-grid><sheet-tabs></sheet-tabs></section><selection-pane></selection-pane><side-bar></side-bar></main>
<status-bar></status-bar><site-mark></site-mark><ime-bar></ime-bar><red-arrows></red-arrows>`);
</script>
</body>
</html>
